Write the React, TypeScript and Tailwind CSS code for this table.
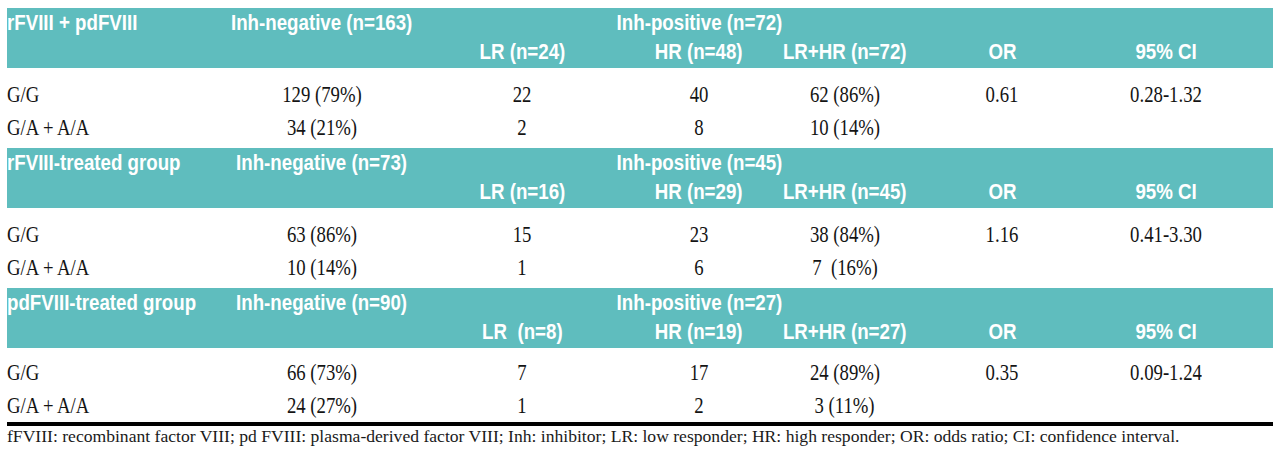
import React from 'react'

interface Group {
  title: string
  neg: string
  pos: string
  lr: string
  hr: string
  both: string
  rows: string[][]
}

const groups: Group[] = [
  {
    title: 'rFVIII + pdFVIII',
    neg: 'Inh-negative (n=163)',
    pos: 'Inh-positive (n=72)',
    lr: 'LR (n=24)',
    hr: 'HR (n=48)',
    both: 'LR+HR (n=72)',
    rows: [
      ['G/G', '129 (79%)', '22', '40', '62 (86%)', '0.61', '0.28-1.32'],
      ['G/A + A/A', '34 (21%)', '2', '8', '10 (14%)', '', ''],
    ],
  },
  {
    title: 'rFVIII-treated group',
    neg: 'Inh-negative (n=73)',
    pos: 'Inh-positive (n=45)',
    lr: 'LR (n=16)',
    hr: 'HR (n=29)',
    both: 'LR+HR (n=45)',
    rows: [
      ['G/G', '63 (86%)', '15', '23', '38 (84%)', '1.16', '0.41-3.30'],
      ['G/A + A/A', '10 (14%)', '1', '6', '7  (16%)', '', ''],
    ],
  },
  {
    title: 'pdFVIII-treated group',
    neg: 'Inh-negative (n=90)',
    pos: 'Inh-positive (n=27)',
    lr: 'LR  (n=8)',
    hr: 'HR (n=19)',
    both: 'LR+HR (n=27)',
    rows: [
      ['G/G', '66 (73%)', '7', '17', '24 (89%)', '0.35', '0.09-1.24'],
      ['G/A + A/A', '24 (27%)', '1', '2', '3 (11%)', '', ''],
    ],
  },
]

const cols = 'grid grid-cols-[215px_200px_200px_154px_138px_176px_152px]'
const head = "h-[29px] leading-[29px] whitespace-pre text-white font-bold text-[22px] font-['Liberation_Sans',Arial,sans-serif]"
const cell = "h-[33px] leading-[33px] whitespace-pre text-[24px] text-[#141414] font-['Liberation_Serif','Times_New_Roman',serif]"

const H = ({ text, left }: { text: string; left?: boolean }) => (
  <div className={`${head} flex ${left ? 'justify-start' : 'justify-center'}`}>
    <span className={`shrink-0 scale-x-[0.85] ${left ? 'origin-left' : 'origin-center'}`}>{text}</span>
  </div>
)

const App = () => {
  return (
    <div className="w-[1280px] h-[457px] bg-white pt-[8px] pl-[7px] overflow-hidden">
      <div className="w-[1266px]">
        {groups.map((g, gi) => (
          <div key={g.title}>
            <div className="bg-[#5fbdbe] h-[60px]">
              <div className={cols}>
                <H text={g.title} left />
                <H text={g.neg} />
                <div />
                <H text={g.pos} />
              </div>
              <div className={cols}>
                <div />
                <div />
                <H text={g.lr} />
                <H text={g.hr} />
                <H text={g.both} />
                <H text="OR" />
                <H text="95% CI" />
              </div>
            </div>
            <div className={gi === 2 ? 'pt-[8px]' : 'pt-[10px] pb-[4px]'}>
              {g.rows.map((r, ri) => (
                <div key={ri} className={cols}>
                  {r.map((v, ci) => (
                    <div key={ci} className={`${cell} flex ${ci === 0 ? 'justify-start' : 'justify-center'}`}>
                      <span className={`shrink-0 scale-x-[0.78] ${ci === 0 ? 'origin-left' : 'origin-center'}`}>{v}</span>
                    </div>
                  ))}
                </div>
              ))}
            </div>
          </div>
        ))}
        <div className="h-[4px] bg-black" />
        <p className="leading-[20px] text-[17.6px] text-[#1a1a1a] whitespace-nowrap font-['Liberation_Serif','Times_New_Roman',serif]">
          fFVIII: recombinant factor VIII; pd FVIII: plasma-derived factor VIII; Inh: inhibitor; LR: low responder; HR: high responder; OR: odds ratio; CI: confidence interval.
        </p>
      </div>
    </div>
  )
}

export default App
